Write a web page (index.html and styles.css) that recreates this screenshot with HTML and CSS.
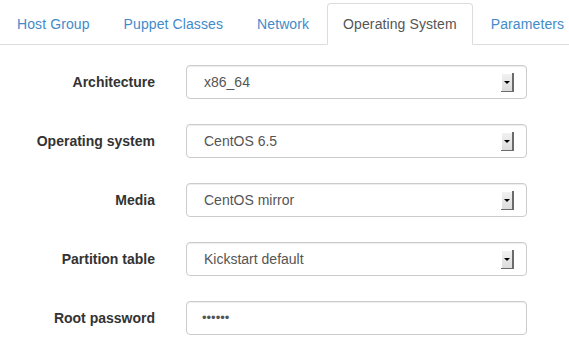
FILE: index.html
```html
<!DOCTYPE html>
<html lang="en">
<head>
    <meta charset="UTF-8">
    <title>Edit Host - Operating System</title>
    <link rel="stylesheet" href="styles.css">
</head>
<body>
    <ul class="nav-tabs">
        <li><a href="#">Host Group</a></li>
        <li><a href="#">Puppet Classes</a></li>
        <li><a href="#">Network</a></li>
        <li class="active"><a href="#">Operating System</a></li>
        <li><a href="#">Parameters</a></li>
    </ul>

    <form class="os-form">
        <div class="form-group">
            <label class="control-label">Architecture</label>
            <div class="select-box">
                <span>x86_64</span>
                <span class="select-arrow"></span>
            </div>
        </div>
        <div class="form-group">
            <label class="control-label">Operating system</label>
            <div class="select-box">
                <span>CentOS 6.5</span>
                <span class="select-arrow"></span>
            </div>
        </div>
        <div class="form-group">
            <label class="control-label">Media</label>
            <div class="select-box">
                <span>CentOS mirror</span>
                <span class="select-arrow"></span>
            </div>
        </div>
        <div class="form-group">
            <label class="control-label">Partition table</label>
            <div class="select-box">
                <span>Kickstart default</span>
                <span class="select-arrow"></span>
            </div>
        </div>
        <div class="form-group">
            <label class="control-label">Root password</label>
            <div class="select-box password-box">
                <span class="dots">&bull;&bull;&bull;&bull;&bull;&bull;</span>
            </div>
        </div>
    </form>
</body>
</html>
```

FILE: styles.css
```css
* {
    margin: 0;
    padding: 0;
    box-sizing: border-box;
}

body {
    font-family: "Liberation Sans", Arial, sans-serif;
    font-size: 14px;
    line-height: 20px;
    color: #333;
    background: #fff;
    overflow: hidden;
}

.nav-tabs {
    list-style: none;
    display: flex;
    margin-top: 3px;
    padding-left: 1px;
    border-bottom: 1px solid #ddd;
}

.nav-tabs li {
    margin-bottom: -1px;
    margin-right: 2px;
}

.nav-tabs a {
    display: block;
    padding: 10px 15px;
    border: 1px solid transparent;
    border-radius: 4px 4px 0 0;
    color: #428bca;
    text-decoration: none;
    white-space: nowrap;
    letter-spacing: 0.1px;
}

.nav-tabs li.active a {
    color: #555;
    background: #fff;
    border-color: #ddd;
    border-bottom-color: transparent;
}

.os-form {
    padding-top: 20px;
}

.form-group {
    display: grid;
    grid-template-columns: 155px 341px;
    column-gap: 31px;
    margin-bottom: 25px;
}

.control-label {
    text-align: right;
    font-weight: bold;
    padding-top: 7px;
    white-space: nowrap;
}

.select-box {
    height: 34px;
    display: flex;
    align-items: center;
    justify-content: space-between;
    padding: 0 12px 0 17px;
    border: 1px solid #ccc;
    border-radius: 4px;
    color: #555;
    box-shadow: inset 0 1px 1px rgba(0, 0, 0, 0.075);
}

.password-box {
    padding-left: 15px;
}

.dots {
    font-size: 13px;
    color: #555;
}

.select-arrow {
    position: relative;
    width: 13px;
    height: 19px;
    margin-top: 1px;
    background: linear-gradient(#f2f2f2, #dcdcdc);
    border-right: 2px solid #6b6b6b;
    border-bottom: 1px solid #6b6b6b;
    box-shadow: inset 1px 1px 0 #fff;
}

.select-arrow::after {
    content: '';
    position: absolute;
    top: 8px;
    left: 3px;
    border-left: 3px solid transparent;
    border-right: 3px solid transparent;
    border-top: 3px solid #000;
}
```
